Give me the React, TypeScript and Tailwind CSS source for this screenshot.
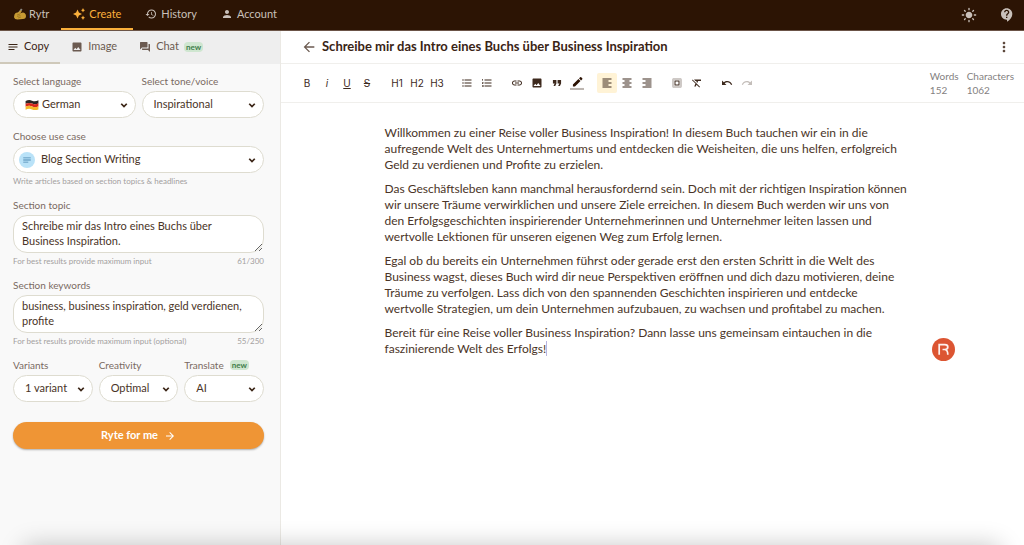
import { useState, ReactNode } from 'react';
import clsx from 'clsx';
import {
  MdArrowBack,
  MdArrowForward,
  MdContactSupport,
  MdForum,
  MdFormatAlignCenter,
  MdFormatAlignLeft,
  MdFormatAlignRight,
  MdFormatClear,
  MdFormatListBulleted,
  MdFormatListNumbered,
  MdFormatQuote,
  MdHistory,
  MdImage,
  MdLightMode,
  MdLink,
  MdMoreVert,
  MdNotes,
  MdPerson,
  MdRedo,
  MdSelectAll,
  MdUndo,
} from 'react-icons/md';

const paragraphs = [
  [
    'Willkommen zu einer Reise voller Business Inspiration! In diesem Buch tauchen wir ein in die',
    'aufregende Welt des Unternehmertums und entdecken die Weisheiten, die uns helfen, erfolgreich',
    'Geld zu verdienen und Profite zu erzielen.',
  ],
  [
    'Das Geschäftsleben kann manchmal herausfordernd sein. Doch mit der richtigen Inspiration können',
    'wir unsere Träume verwirklichen und unsere Ziele erreichen. In diesem Buch werden wir uns von',
    'den Erfolgsgeschichten inspirierender Unternehmerinnen und Unternehmer leiten lassen und',
    'wertvolle Lektionen für unseren eigenen Weg zum Erfolg lernen.',
  ],
  [
    'Egal ob du bereits ein Unternehmen führst oder gerade erst den ersten Schritt in die Welt des',
    'Business wagst, dieses Buch wird dir neue Perspektiven eröffnen und dich dazu motivieren, deine',
    'Träume zu verfolgen. Lass dich von den spannenden Geschichten inspirieren und entdecke',
    'wertvolle Strategien, um dein Unternehmen aufzubauen, zu wachsen und profitabel zu machen.',
  ],
  [
    'Bereit für eine Reise voller Business Inspiration? Dann lasse uns gemeinsam eintauchen in die',
    'faszinierende Welt des Erfolgs!',
  ],
];

function WritingHand() {
  return (
    <svg className="h-3.5 w-3.5" viewBox="0 0 28 28" aria-hidden="true">
      <path d="M3 21 L16 3 L19 5 L8 22 Z" fill="#8d8a84" />
      <path
        d="M3 15 Q5 10 10 11 L15 7 Q18 6 17 9 L14 13 Q20 10 23 12 Q26 14 26 18 Q26 24 20 24 L9 25 Q3 25 2 20 Z"
        fill="#c79a33"
      />
      <path d="M8 16 L14 14 M8 19 L15 17 M10 22 L16 20" stroke="#8f6a1a" strokeWidth="1.3" fill="none" />
    </svg>
  );
}

function Sparkles() {
  return (
    <svg className="h-3 w-3" viewBox="0 0 24 24" fill="currentColor" aria-hidden="true">
      <path d="M9 3 L11.800 9.200 L18 12 L11.800 14.800 L9 21 L6.200 14.800 L0 12 L6.200 9.200 Z" />
      <path d="M20 0 L21.400 3 L24 4.400 L21.400 5.800 L20 9 L18.600 5.800 L16 4.400 L18.600 3 Z" />
      <path d="M20 15 L21.400 18 L24 19.400 L21.400 20.800 L20 24 L18.600 20.800 L16 19.400 L18.600 18 Z" />
    </svg>
  );
}

function GermanFlag() {
  return (
    <svg className="h-3.5 w-3.5" viewBox="0 0 24 24" aria-hidden="true">
      <path d="M1 5 Q7 2 12 4.500 T23 4 V9.500 Q17 12 12 9.500 T1 10 Z" fill="#2b2624" />
      <path d="M1 10 Q7 7 12 9.500 T23 9 V14.500 Q17 17 12 14.500 T1 15 Z" fill="#d8291c" />
      <path d="M1 15 Q7 12 12 14.500 T23 14 V19.500 Q17 22 12 19.500 T1 20 Z" fill="#f5b92b" />
    </svg>
  );
}

function Chevron() {
  return (
    <svg
      className="pointer-events-none absolute inset-y-0 right-1.5 my-auto h-3 w-3 text-[#3a2415]"
      viewBox="0 0 24 24"
      fill="none"
      stroke="currentColor"
      strokeWidth="3.500"
      aria-hidden="true"
    >
      <path d="M6.500 9.500 L12 15 L17.500 9.500" />
    </svg>
  );
}

function PenIcon() {
  return (
    <svg className="h-3.5 w-3.5" viewBox="0 0 24 24" aria-hidden="true">
      <path d="M5 14.500 V18 H8.500 L18 8.500 L14.500 5 Z M19 7.500 L21 5.500 Q21.800 4.600 21 3.800 L19.200 2 Q18.400 1.200 17.500 2 L15.500 4 Z" fill="#2c1203" />
      <path d="M0 20.500 H24 V24 H0 Z" fill="#bdb6b1" />
    </svg>
  );
}

function NewBadge() {
  return (
    <span className="rounded-sm bg-[#cfe6d0] px-0.5 text-[8px] leading-[10px] font-bold text-[#3f7d4a]">new</span>
  );
}

function NavItem({ icon, label, active }: { icon: ReactNode; label: string; active?: boolean }) {
  return (
    <a
      href="#"
      className={clsx(
        'flex items-center gap-1 border-b-2 px-3',
        active ? 'border-[#fbb03b] text-[#fbb03b]' : 'border-transparent text-[#c9c0ba]'
      )}
    >
      {icon}
      {label}
    </a>
  );
}

type SelectFieldProps = {
  id: string;
  label: string;
  options: string[];
  icon?: ReactNode;
  isNew?: boolean;
  padding?: string;
};

function SelectField({ id, label, options, icon, isNew, padding = 'pl-[11px]' }: SelectFieldProps) {
  return (
    <div className="min-w-0 flex-1">
      <div className="mb-0.5 flex h-4 items-center gap-1.5">
        <label htmlFor={id} className="text-[10px] text-[#7a6a62]">{label}</label>
        {isNew && <NewBadge />}
      </div>
      <div className="relative">
        {icon && <span className="pointer-events-none absolute inset-y-0 left-0 flex items-center">{icon}</span>}
        <select
          id={id}
          className={clsx(
            'block h-[27px] w-full appearance-none rounded-full border border-[#dedcd0] bg-white pr-5 text-[11px] text-[#4a3427] outline-none',
            padding
          )}
        >
          {options.map(option => (
            <option key={option}>{option}</option>
          ))}
        </select>
        <Chevron />
      </div>
    </div>
  );
}

type TextFieldProps = { id: string; label: string; hint: string; initial: string; max: number };

function TextField({ id, label, hint, initial, max }: TextFieldProps) {
  const [value, setValue] = useState(initial);

  return (
    <div>
      <label htmlFor={id} className="mb-0.5 block text-[10px] leading-4 text-[#7a6a62]">{label}</label>
      <textarea
        id={id}
        value={value}
        maxLength={max}
        onChange={e => setValue(e.target.value)}
        className="block h-[38px] w-full resize-y overflow-hidden rounded-[14px] border border-[#dedcd0] bg-white px-2 py-0.5 text-[11px] leading-[15px] text-[#4a3427] outline-none"
      />
      <div className="mt-0.5 flex justify-between text-[8px] leading-3 text-[#a3a09e]">
        <span>{hint}</span>
        <span>{value.length}/{max}</span>
      </div>
    </div>
  );
}

function ToolButton({ label, children, active }: { label: string; children: ReactNode; active?: boolean }) {
  return (
    <button
      type="button"
      aria-label={label}
      className={clsx(
        'flex h-5 w-5 items-center justify-center rounded-xs font-["Inter",sans-serif] text-[10px] text-[#3d291d]',
        active && 'bg-[#fff3d6]'
      )}
    >
      {children}
    </button>
  );
}

function Toolbar() {
  return (
    <div className="flex flex-wrap items-center gap-2.5">
      <div className="flex">
        <ToolButton label="Bold">B</ToolButton>
        <ToolButton label="Italic"><i>i</i></ToolButton>
        <ToolButton label="Underline"><u>U</u></ToolButton>
        <ToolButton label="Strikethrough"><s>S</s></ToolButton>
      </div>
      <div className="flex">
        <ToolButton label="Heading 1">H1</ToolButton>
        <ToolButton label="Heading 2">H2</ToolButton>
        <ToolButton label="Heading 3">H3</ToolButton>
      </div>
      <div className="flex">
        <ToolButton label="Bulleted list"><MdFormatListBulleted className="h-3 w-3" /></ToolButton>
        <ToolButton label="Numbered list"><MdFormatListNumbered className="h-3 w-3" /></ToolButton>
      </div>
      <div className="flex">
        <ToolButton label="Link"><MdLink className="h-3 w-3" /></ToolButton>
        <ToolButton label="Image"><MdImage className="h-3 w-3" /></ToolButton>
        <ToolButton label="Quote"><MdFormatQuote className="h-3.5 w-3.5" /></ToolButton>
        <ToolButton label="Text color"><PenIcon /></ToolButton>
      </div>
      <div className="flex">
        <ToolButton label="Align left" active><MdFormatAlignLeft className="h-3 w-3" /></ToolButton>
        <ToolButton label="Align center"><MdFormatAlignCenter className="h-3 w-3" /></ToolButton>
        <ToolButton label="Align right"><MdFormatAlignRight className="h-3 w-3" /></ToolButton>
      </div>
      <div className="flex">
        <ToolButton label="Select all"><MdSelectAll className="h-3 w-3" /></ToolButton>
        <ToolButton label="Clear formatting"><MdFormatClear className="h-3 w-3" /></ToolButton>
      </div>
      <div className="flex">
        <ToolButton label="Undo"><MdUndo className="h-3 w-3" /></ToolButton>
        <ToolButton label="Redo"><MdRedo className="h-3 w-3 text-[#c4beba]" /></ToolButton>
      </div>
    </div>
  );
}

function Sidebar() {
  return (
    <aside className="w-[281px] shrink-0 border-r border-[#ebe9e4] bg-[#f9f9f9]">
      <nav className="flex h-[33px] bg-[#eeeeee] text-[11px] text-[#6b5a50]">
        <a href="#" className="flex items-center gap-[5px] border-b-2 border-[#cfc9ba] pr-[11px] pl-[7px] text-[#3a2415]">
          <MdNotes className="h-3 w-3" />
          Copy
        </a>
        <a href="#" className="flex items-center gap-[5px] border-b-2 border-transparent px-[11px]">
          <MdImage className="h-3 w-3" />
          Image
        </a>
        <a href="#" className="flex items-center gap-[5px] border-b-2 border-transparent px-[11px]">
          <MdForum className="h-3 w-3" />
          Chat
          <NewBadge />
        </a>
      </nav>

      <form className="flex flex-col gap-2.5 pt-[9px] pr-4 pb-6 pl-[13px]" onSubmit={e => e.preventDefault()}>
        <div className="flex gap-1.5">
          <SelectField
            id="language"
            label="Select language"
            options={['German', 'English', 'French', 'Spanish']}
            icon={<span className="pl-3"><GermanFlag /></span>}
            padding="pl-7"
          />
          <SelectField id="tone" label="Select tone/voice" options={['Inspirational', 'Casual', 'Convincing', 'Formal']} />
        </div>

        <div>
          <SelectField
            id="use-case"
            label="Choose use case"
            options={['Blog Section Writing', 'Blog Idea & Outline', 'Email', 'Story Plot']}
            padding="pl-[27px]"
            icon={
              <span className="ml-1.5 flex h-4 w-4 items-center justify-center rounded-full bg-[#b9e2f8]">
                <MdNotes className="h-2.5 w-2.5 text-[#4a86b0]" />
              </span>
            }
          />
          <p className="mt-0.5 text-[8px] leading-3 text-[#a3a09e]">Write articles based on section topics &amp; headlines</p>
        </div>

        <TextField
          id="topic"
          label="Section topic"
          hint="For best results provide maximum input"
          initial="Schreibe mir das Intro eines Buchs über Business Inspiration."
          max={300}
        />
        <TextField
          id="keywords"
          label="Section keywords"
          hint="For best results provide maximum input (optional)"
          initial="business, business inspiration, geld verdienen, profite"
          max={250}
        />

        <div className="flex gap-1.5">
          <SelectField id="variants" label="Variants" options={['1 variant', '2 variants', '3 variants']} />
          <SelectField id="creativity" label="Creativity" options={['Optimal', 'None', 'Low', 'High', 'Max']} />
          <SelectField id="translate" label="Translate" options={['AI', 'Google']} isNew />
        </div>

        <button
          type="submit"
          className="mt-2.5 flex h-[27px] items-center justify-center gap-1.5 rounded-full bg-[#ef9535] text-[11px] font-bold text-white shadow-[0_1px_2px_rgba(0,0,0,0.3)]"
        >
          Ryte for me
          <MdArrowForward className="h-3 w-3" />
        </button>
      </form>
    </aside>
  );
}

function Editor() {
  return (
    <main className="relative min-w-0 flex-1 bg-white">
      <div className="flex h-[33px] items-center gap-[5px] border-b border-[#f0efec] pr-3 pl-5">
        <button type="button" aria-label="Back">
          <MdArrowBack className="h-4 w-4 text-[#6b5a50]" />
        </button>
        <h1 className="text-[13px] font-bold text-[#3a2415]">Schreibe mir das Intro eines Buchs über Business Inspiration</h1>
        <button type="button" aria-label="More options" className="ml-auto">
          <MdMoreVert className="h-4 w-4 text-[#5b463a]" />
        </button>
      </div>

      <div className="flex min-h-[39px] items-center justify-between border-b border-[#f0efec] pr-2.5 pl-4">
        <Toolbar />
        <dl className="flex gap-2 text-[10px] leading-[14px] text-[#84817f]">
          <div>
            <dt>Words</dt>
            <dd>152</dd>
          </div>
          <div>
            <dt>Characters</dt>
            <dd>1062</dd>
          </div>
        </dl>
      </div>

      <article className="mx-auto flex max-w-[536px] flex-col gap-2 pt-[22px] pb-8 text-[12px] leading-4 text-[#4a3427]">
        {paragraphs.map((lines, i) => (
          <p key={i}>
            {lines.map((line, j) => (
              <span key={j}>
                {line}
                {j < lines.length - 1 && <br />}
              </span>
            ))}
            {i === paragraphs.length - 1 && <span className="border-l border-[#b9b4e0]" />}
          </p>
        ))}
      </article>

      <button type="button" aria-label="Open assistant" className="absolute top-[307px] right-[69px]">
        <svg className="h-[23px] w-[23px]" viewBox="0 0 24 24">
          <circle cx="12" cy="12" r="12" fill="#dc5532" />
          <path
            d="M7.500 17.500 V7 H13.500 Q16.500 7 16.500 9.500 Q16.500 12 13.500 12 H11 M13.500 12 Q16.500 12.500 16.500 17.500"
            fill="none"
            stroke="#fdf1ed"
            strokeWidth="1.800"
          />
        </svg>
      </button>
    </main>
  );
}

export default function App() {
  return (
    <div className='flex min-h-screen flex-col font-["Lato",sans-serif]'>
      <header className="flex h-[31px] items-stretch border-b border-[#6b5447] bg-[#2c1404] text-[11px]">
        <a href="#" className="flex items-center gap-0.5 border-b-2 border-transparent pr-3 pl-[13px] text-[#c9c0ba]">
          <WritingHand />
          Rytr
        </a>
        <nav className="flex">
          <NavItem icon={<Sparkles />} label="Create" active />
          <NavItem icon={<MdHistory className="h-3 w-3" />} label="History" />
          <NavItem icon={<MdPerson className="h-3 w-3" />} label="Account" />
        </nav>
        <div className="ml-auto flex items-center gap-[22px] pr-[9px] text-[#c9c0ba]">
          <button type="button" aria-label="Toggle theme"><MdLightMode className="h-4 w-4" /></button>
          <button type="button" aria-label="Help"><MdContactSupport className="h-4 w-4" /></button>
        </div>
      </header>

      <div className="flex flex-1">
        <Sidebar />
        <Editor />
      </div>

      {/* Soft shadow rising from the bottom edge */}
      <div className="pointer-events-none fixed inset-x-6 top-full h-10 shadow-[0_0_24px_rgba(0,0,0,0.22)]" />
    </div>
  );
}
